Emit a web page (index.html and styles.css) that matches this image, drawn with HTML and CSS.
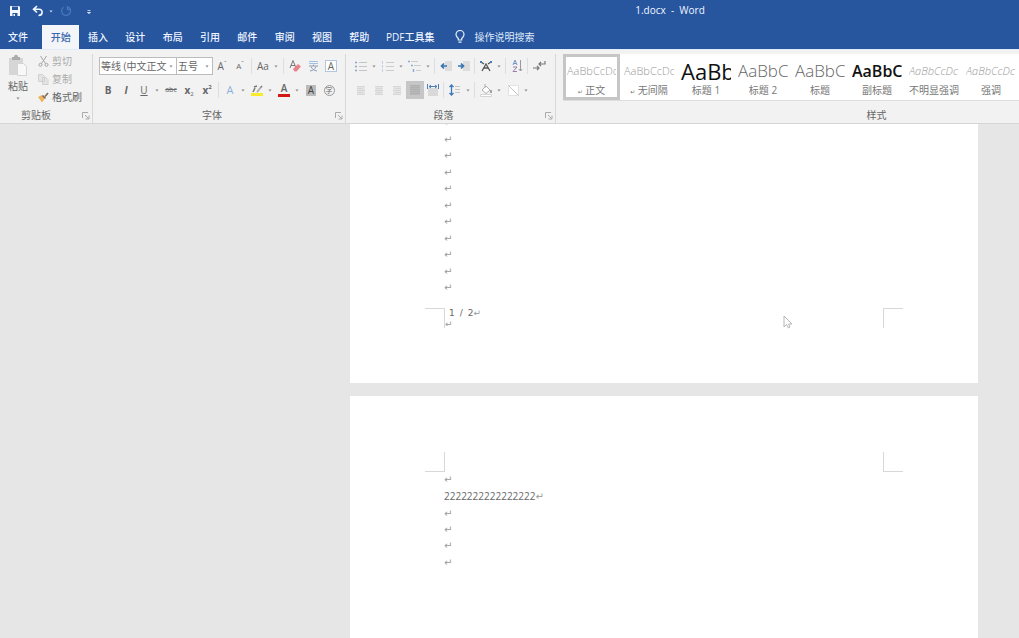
FILE: index.html
```html
<!DOCTYPE html>
<html lang="zh-CN">
<head>
<meta charset="utf-8">
<title>1.docx - Word</title>
<link rel="stylesheet" href="styles.css">
</head>
<body>
<svg class="defs" aria-hidden="true">
  <symbol id="caret" viewBox="0 0 5 3"><path d="M.5 .3h4L2.500 2.700z"/></symbol>
  <symbol id="launch" viewBox="0 0 8 8"><path d="M.5 6V.5H6M3 3l3.500 3.500M7 3.500V7H3.500" fill="none" stroke="#aaa"/></symbol>
</svg>
<header class="titlebar">
  <div class="quick">
    <button class="qbtn" aria-label="保存"><svg viewBox="0 0 12 12" width="12" height="12"><path d="M1 1h9l1 1v9H1z" fill="#f3f7ff"/><path d="M3 1.500h6v3.500H3zM3.500 8h5v3h-5z" fill="#27569f"/><path d="M4.500 9h1.500v2H4.500z" fill="#f3f7ff"/></svg></button>
    <button class="qbtn" aria-label="撤消"><svg viewBox="0 0 12 12" width="12" height="12"><path d="M5 1L1.500 4.300 5 7.500M2 4.300h5c4.500 0 4 6.200-.5 6.200" fill="none" stroke="#f3f7ff" stroke-width="1.600"/></svg></button>
    <svg class="caret light"><use href="#caret"/></svg>
    <button class="qbtn" aria-label="重复"><svg viewBox="0 0 12 12" width="12" height="12"><path d="M7.500 1.600A4.500 4.500 0 1 1 3.500 2.200M7.500 1v3.500H11" fill="none" stroke="#4b76b9" stroke-width="1.300"/></svg></button>
    <button class="qbtn" aria-label="自定义快速访问工具栏"><svg viewBox="0 0 12 12" width="12" height="12"><path d="M4.500 5.500h3M4.500 7.500h3L6 8.500z" fill="#dfe9fb" stroke="#dfe9fb" stroke-width=".8"/></svg></button>
  </div>
  <div class="doc-title">1.docx&nbsp; -&nbsp; Word</div>
</header>
<nav class="tabs">
  <button class="tab file">文件</button>
  <div class="tab-set">
    <button class="tab active">开始</button><button class="tab">插入</button><button class="tab">设计</button><button class="tab">布局</button><button class="tab">引用</button><button class="tab">邮件</button><button class="tab">审阅</button><button class="tab">视图</button><button class="tab">帮助</button>
  </div>
  <button class="tab pdf">PDF工具集</button>
  <label class="search"><svg viewBox="0 0 10 14" width="10" height="14"><path d="M3.300 10V8.500C2.200 7.300 1 6.400 1 4.500a4 4 0 0 1 8 0c0 1.900-1.200 2.800-2.300 4V10zM3.500 12.200h3" fill="none" stroke="#e5eefc" stroke-width="1.200"/></svg><input type="text" placeholder="操作说明搜索" aria-label="操作说明搜索"></label>
</nav>
<section class="ribbon">
  <div class="group clipboard">
    <div class="group-body clip-body">
      <button class="paste"><svg viewBox="0 0 22 24" width="22" height="24"><path d="M2 4h14v17H2z" fill="#d6d6d6"/><path d="M5 3h2c0-3 4-3 4 0h2v3H5z" fill="#acacac"/><path d="M10.500 9.500h6l3 3v9h-9z" fill="#f8f8f8" stroke="#d4d4d4"/></svg><span>粘贴</span><svg class="caret"><use href="#caret"/></svg></button>
      <div class="clip-list">
        <button class="clip off"><svg viewBox="0 0 11 11" width="11" height="11"><path d="M2.500 0l5 7.500M8.500 0l-5 7.500" stroke="#a3a3a3" fill="none"/><circle cx="2.500" cy="8.800" r="1.500" fill="none" stroke="#a3a3a3"/><circle cx="8.500" cy="8.800" r="1.500" fill="none" stroke="#a3a3a3"/></svg>剪切</button>
        <button class="clip off"><svg viewBox="0 0 11 11" width="11" height="11"><path d="M.5 .5h4l2 2v5h-6zM4.500 3.500h3.500l2 2v5H4.500z" fill="#e4e4e4" stroke="#d0d0d0"/></svg>复制</button>
        <button class="clip"><svg viewBox="0 0 11 11" width="11" height="11"><path d="M0 5l4-2 3 3-3 4.500z" fill="#edb45c"/><path d="M4.500 3.500l3 3M7 4.500l3-3.500" stroke="#7b6b5a" stroke-width="1.600"/></svg>格式刷</button>
      </div>
    </div>
    <div class="group-label">剪贴板<button class="launcher" aria-label="剪贴板设置"><svg width="8" height="8"><use href="#launch"/></svg></button></div>
  </div>
  <div class="group font">
    <div class="group-body">
      <div class="row">
        <label class="combo name"><select aria-label="字体"><option>等线 (中文正文</option></select><svg class="caret"><use href="#caret"/></svg></label>
        <label class="combo size"><select aria-label="字号"><option>五号</option></select><svg class="caret"><use href="#caret"/></svg></label>
        <button class="ib letter" aria-label="增大字号">A<sup>ˆ</sup></button>
        <button class="ib letter small" aria-label="减小字号">A<sup>ˇ</sup></button>
        <i class="sep"></i>
        <button class="ib letter">Aa</button><svg class="caret drop"><use href="#caret"/></svg>
        <i class="sep"></i>
        <button class="ib" aria-label="清除格式"><svg viewBox="0 0 18 18"><path d="M4 11l3-7.500L10 11M5 8.500h4" stroke="#777" fill="none"/><path d="M7 12l5-5 3 2.500-4.500 5H8.500z" fill="#e9828b"/></svg></button>
        <button class="ib" aria-label="拼音指南"><svg viewBox="0 0 18 18"><path d="M5 4.500h9M5 6.500h9" stroke="#a3bfe2"/><path d="M5 9h9M9.500 7.500V9M7 9.500c1 2.500 3 4 6 4.500M12 9.500c-1 2.500-3 4-6 4.500" stroke="#8c9db8" fill="none"/></svg></button>
        <button class="ib" aria-label="字符边框"><span class="boxed">A</span></button>
      </div>
      <div class="row">
        <button class="ib letter bold">B</button><button class="ib letter ital">I</button><button class="ib letter under">U</button><svg class="caret drop"><use href="#caret"/></svg>
        <button class="ib letter strike">abc</button><button class="ib letter bold">x<sub>2</sub></button><button class="ib letter bold">x<sup>2</sup></button>
        <i class="sep"></i>
        <button class="ib letter glow">A</button><svg class="caret drop"><use href="#caret"/></svg>
        <button class="ib" aria-label="突出显示"><svg viewBox="0 0 18 18"><path d="M3 12h12v3H3z" fill="#f8ec2a"/><path d="M5 11l2-4M9 11l5-6M6 6l3-1" stroke="#777" stroke-width="1.500"/><path d="M8 11.500l5-5" stroke="#dedede"/></svg></button><svg class="caret drop"><use href="#caret"/></svg>
        <button class="ib" aria-label="字体颜色"><span class="colored">A</span></button><svg class="caret drop"><use href="#caret"/></svg>
        <button class="ib" aria-label="字符底纹"><span class="shaded">A</span></button>
        <button class="ib" aria-label="带圈字符"><span class="ringed">字</span></button>
      </div>
    </div>
    <div class="group-label">字体<button class="launcher" aria-label="字体设置"><svg width="8" height="8"><use href="#launch"/></svg></button></div>
  </div>
  <div class="group para">
    <div class="group-body">
      <div class="row">
        <button class="ib" aria-label="项目符号"><svg viewBox="0 0 18 18"><path d="M7 5.500h8M7 9.500h8M7 13.500h8" stroke="#c4c4c4"/><path d="M3 5.500h2M3 9.500h2M3 13.500h2" stroke="#8ca4c9" stroke-width="1.500"/></svg></button><svg class="caret drop"><use href="#caret"/></svg>
        <button class="ib" aria-label="编号"><svg viewBox="0 0 18 18"><path d="M7 5.500h8M7 9.500h8M7 13.500h8" stroke="#ccc"/><path d="M3.500 4v3M3.500 8v3M3.500 12v3" stroke="#c4d0e2"/></svg></button><svg class="caret drop"><use href="#caret"/></svg>
        <button class="ib" aria-label="多级列表"><svg viewBox="0 0 18 18"><path d="M5 4.500h7M8 8.500h7M10 13.500h5" stroke="#ccc"/><path d="M2 4.500h2M5 8.500h2M7.500 12v3" stroke="#8fabd4" stroke-width="1.500"/></svg></button><svg class="caret drop"><use href="#caret"/></svg>
        <i class="sep"></i>
        <button class="ib" aria-label="减少缩进"><svg viewBox="0 0 18 18"><path d="M8 4h7v10H8z" fill="#ddd"/><path d="M4 9h6M7 6.500L4.500 9 7 11.500" stroke="#3674b5" stroke-width="1.700" fill="none"/></svg></button>
        <button class="ib" aria-label="增加缩进"><svg viewBox="0 0 18 18"><path d="M8 4h7v10H8z" fill="#ddd"/><path d="M3 9h6M6 6.500L8.500 9 6 11.500" stroke="#3674b5" stroke-width="1.700" fill="none"/></svg></button>
        <i class="sep"></i>
        <button class="ib" aria-label="中文版式"><svg viewBox="0 0 18 18"><path d="M5 14l4-7 4 7M6.500 11h5" stroke="#555" stroke-width="1.300" fill="none"/><path d="M4 5l3 2M14 5l-3 2" stroke="#555" stroke-width="1.300"/><path d="M3 4h2v2H3zM13 4h2v2h-2z" fill="#477cb8"/></svg></button><svg class="caret drop"><use href="#caret"/></svg>
        <i class="sep"></i>
        <button class="ib" aria-label="排序"><svg viewBox="0 0 18 18"><path d="M5 8l2-5 2 5M5.500 6.500h3" stroke="#7597c8" fill="none"/><path d="M5 10h4l-4 4.500h4" stroke="#a07bae" fill="none"/><path d="M12.500 3v11M10.800 12l1.700 2 1.700-2" stroke="#999" fill="none"/></svg></button>
        <i class="sep"></i>
        <button class="ib" aria-label="显示编辑标记"><svg viewBox="0 0 18 18"><path d="M15 4v3H9M11 5L9 7l2 2M3 11h6M7 9l2 2-2 2" stroke="#777" stroke-width="1.200" fill="none"/></svg></button>
      </div>
      <div class="row">
        <button class="ib" aria-label="左对齐"><svg viewBox="0 0 18 18"><path d="M5 5h8v9H5z" fill="#e4e4e4"/><path d="M5 5.500h8M5 7.500h6M5 9.500h8M5 11.500h6M5 13.500h8" stroke="#d6d6d6"/></svg></button>
        <button class="ib" aria-label="居中"><svg viewBox="0 0 18 18"><path d="M5 5h8v9H5z" fill="#e4e4e4"/><path d="M5 5.500h8M6 7.500h6M5 9.500h8M6 11.500h6M5 13.500h8" stroke="#d6d6d6"/></svg></button>
        <button class="ib" aria-label="右对齐"><svg viewBox="0 0 18 18"><path d="M5 5h8v9H5z" fill="#e4e4e4"/><path d="M5 5.500h8M7 7.500h6M5 9.500h8M7 11.500h6M5 13.500h8" stroke="#d6d6d6"/></svg></button>
        <button class="ib on" aria-label="两端对齐"><svg viewBox="0 0 18 18"><path d="M4 4h10v10H4z" fill="#b8b8b8"/><path d="M4 4.500h10M4 6.500h10M4 8.500h10M4 10.500h10M4 12.500h10" stroke="#b0b0b0"/></svg></button>
        <button class="ib" aria-label="分散对齐"><svg viewBox="0 0 18 18"><path d="M4 7h10v8H4z" fill="#d9d9d9"/><path d="M3.500 3v5M14.500 3v5M5 5.500h8M7 4L5 5.500 7 7M11 4l2 1.500L11 7" stroke="#4c80bc" fill="none"/></svg></button>
        <i class="sep"></i>
        <button class="ib" aria-label="行距"><svg viewBox="0 0 18 18"><path d="M9 5.500h5M9 8.500h5M9 11.500h5" stroke="#c4c4c4"/><path d="M5.500 4v10M3.500 6l2-2 2 2M3.500 12l2 2 2-2" stroke="#3f78b6" stroke-width="1.300" fill="none"/></svg></button><svg class="caret drop"><use href="#caret"/></svg>
        <i class="sep"></i>
        <button class="ib" aria-label="底纹"><svg viewBox="0 0 18 18"><path d="M5 9l4-4 4 4-4 3.500zM8 3v4" stroke="#b0b0b0" fill="#fff"/><path d="M14 9v3" stroke="#888" stroke-width="1.500"/><path d="M3.500 13.500h11v2h-11z" fill="#fff" stroke="#d4d4d4"/></svg></button><svg class="caret drop"><use href="#caret"/></svg>
        <button class="ib" aria-label="边框"><svg viewBox="0 0 18 18"><path d="M4.500 4.500h10v10h-10z" fill="#fff" stroke="#e2e2e2"/><path d="M4.500 4.500l10 10" stroke="#c4c4c4"/></svg></button><svg class="caret drop"><use href="#caret"/></svg>
      </div>
    </div>
    <div class="group-label">段落<button class="launcher" aria-label="段落设置"><svg width="8" height="8"><use href="#launch"/></svg></button></div>
  </div>
  <div class="group styles">
    <div class="gallery">
      <button class="style chosen"><span class="preview body">AaBbCcDc</span><span class="cap"><span class="pm">↵</span> 正文</span></button>
      <button class="style"><span class="preview body">AaBbCcDc</span><span class="cap"><span class="pm">↵</span> 无间隔</span></button>
      <button class="style"><span class="preview h1">AaBb</span><span class="cap">标题 1</span></button>
      <button class="style"><span class="preview h2">AaBbC</span><span class="cap">标题 2</span></button>
      <button class="style"><span class="preview h2">AaBbC</span><span class="cap">标题</span></button>
      <button class="style"><span class="preview sub">AaBbC</span><span class="cap">副标题</span></button>
      <button class="style"><span class="preview body em">AaBbCcDc</span><span class="cap">不明显强调</span></button>
      <button class="style"><span class="preview body em">AaBbCcDc</span><span class="cap">强调</span></button>
    </div>
    <div class="group-label">样式</div>
  </div>
</section>
<main class="canvas">
  <article class="page first">
    <div class="lines eleven"><p>↵</p><p>↵</p><p>↵</p><p>↵</p><p>↵</p><p>↵</p><p>↵</p><p>↵</p><p>↵</p><p>↵</p><p>↵</p></div>
    <div class="margin-row">
      <i class="crop top right"></i>
      <div class="footer"><p class="page-no">1<span>/</span>2<b>↵</b></p><p>↵</p></div>
      <i class="crop top left"></i>
    </div>
  </article>
  <article class="page second">
    <div class="margin-row"><i class="crop bottom right"></i><i class="crop bottom left"></i></div>
    <div class="lines six"><p>↵</p><p><span>2222222222222222</span>↵</p><p>↵</p><p>↵</p><p>↵</p><p>↵</p></div>
  </article>
</main>
<svg class="pointer" viewBox="0 0 10 14" width="10" height="14"><path d="M1 1v11l2.500-2.500 2 3.500 1.500-1-1.500-3H9z" fill="#fff" stroke="#b4b4b4"/></svg>
</body>
</html>
```
FILE: styles.css
```css
* { box-sizing: border-box; }
body {
  margin: 0;
  height: 100vh;
  display: flex;
  flex-direction: column;
  overflow: hidden;
  background: #e6e6e6;
  color: #666;
  font: 10px/14px "Open Sans", "Noto Sans CJK SC", sans-serif;
}
button, input, select {
  font: inherit;
  color: inherit;
  background: none;
  border: 0;
  padding: 0;
  margin: 0;
}
p { margin: 0; }
.defs { position: absolute; width: 0; height: 0; }
.caret { width: 4px; height: 3px; fill: #888; flex: none; }
.caret.light { fill: #c5d6f2; }
.caret.drop { width: 9px; padding: 0 3px 0 2px; }

.titlebar {
  position: relative;
  display: flex;
  align-items: center;
  height: 25px;
  flex: none;
  padding-bottom: 3px;
  background: #27569f;
  color: #f0f5ff;
}
.quick { display: flex; align-items: center; padding-left: 9px; }
.qbtn { display: flex; width: 12px; }
.qbtn + .qbtn { margin-left: 11px; }
.quick .caret { margin: 0 7px 0 5px; }
.doc-title { position: absolute; inset: 3px 0 auto; padding-left: 321px; text-align: center; }

.tabs { display: flex; height: 24px; flex: none; background: #27569f; color: #f0f5ff; }
.tab { text-align: center; font-weight: 500; white-space: nowrap; }
.file { width: 36px; margin-right: 6px; }
.tab-set { display: grid; grid-template-columns: repeat(9, 1fr); width: 336px; }
.active { background: #f3f5f9; color: #3a67ad; }
.pdf { padding: 0 8px; }
.search { display: flex; align-items: center; gap: 9px; padding-left: 13px; }
.search input { width: 90px; outline: 0; }
.search input::placeholder { color: #dfe9fb; opacity: 1; }

.ribbon {
  position: relative;
  display: flex;
  height: 75px;
  flex: none;
  padding-top: 4px;
  background: #f2f2f2;
  border-top: 1px solid #e4ebf8;
  border-bottom: 1px solid #d6d6d6;
}
.group { display: flex; flex-direction: column; justify-content: space-between; border-right: 1px solid #d8d8d8; }
.clipboard { width: 93px; }
.font { width: 253px; padding-left: 6px; }
.para { width: 210px; padding-left: 6px; }
.styles { flex: 1; min-width: 0; border: 0; padding-left: 7px; }
.group-label { position: relative; text-align: center; height: 15px; padding-right: 20px; }
.styles .group-label { padding: 0 0 0 171px; }
.launcher { position: absolute; right: 2px; top: 4px; display: flex; }
.group-body { padding-top: 2px; }
.clip-body { display: flex; align-items: flex-start; padding-top: 0; }
.paste { display: flex; flex-direction: column; align-items: center; width: 36px; height: 50px; }
.paste span { margin: 1px 0 4px; }
.clip-list { display: flex; flex-direction: column; padding-left: 2px; }
.clip { display: flex; align-items: center; gap: 3px; height: 18px; line-height: 12px; white-space: nowrap; }
.clip-list { margin-top: -2px; }
.off { color: #aaa; }

.row { display: flex; align-items: center; height: 24px; padding-bottom: 4px; }
.combo { position: relative; display: flex; height: 18px; border: 1px solid #bcbcbc; background: #fff; }
.combo select { appearance: none; width: 100%; padding-left: 1px; outline: 0; }
.combo .caret { position: absolute; right: 3px; top: 7px; }
.name { width: 78px; }
.size { width: 36px; border-left: 0; }
.ib { display: flex; align-items: center; justify-content: center; width: 18px; height: 18px; flex: none; }
.ib > svg { width: 18px; height: 18px; flex: none; }
.sep { width: 1px; height: 16px; margin: 0 2px 0 1px; background: #dedede; }
.font .sep { margin-left: 2px; }
.letter sup, .letter sub { font-size: 6px; line-height: 6px; }
.letter sup { align-self: flex-start; padding-top: 3px; }
.letter sub { align-self: flex-end; padding-bottom: 2px; font-weight: 400; }
.small { font-size: 8px; }
.bold { font-weight: 700; }
.ital { font-style: italic; font-weight: 700; }
.under { text-decoration: underline; }
.strike { font-size: 7px; text-decoration: line-through; }
.glow { color: #8db3dc; font-size: 11px; }
.boxed { width: 12px; height: 12px; border: 1px solid #b4c6de; line-height: 10px; background: #fff; }
.shaded { width: 10px; height: 11px; line-height: 11px; background: #bbb; color: #444; }
.colored { width: 12px; height: 14px; line-height: 11px; font-weight: 600; border-bottom: 3px solid #d31616; }
.ringed { width: 11px; height: 11px; line-height: 9px; font-size: 7px; border: 1px solid #999; border-radius: 50%; }
.on { background: #c6c6c6; }

.gallery { display: grid; grid-template-columns: repeat(8, 1fr); height: 47px; background: #fff; border-bottom: 1px solid #ddd; }
.style { display: flex; flex-direction: column; justify-content: flex-end; min-width: 0; padding: 0 3px 3px 4px; }
.chosen { padding: 0 1px; border: 3px solid #c6c6c6; height: 46px; }
.preview { width: 100%; overflow: hidden; text-align: left; white-space: nowrap; height: 24px; line-height: 24px; color: #999; }
.cap { width: 100%; text-align: center; height: 14px; color: #777; white-space: nowrap; }
.pm { font: 6px/8px "DejaVu Sans", sans-serif; }
.body { font-size: 11px; font-weight: 300; }
.h1 { font-size: 22px; color: #111; }
.h2 { font-size: 17px; font-weight: 300; color: #666; }
.sub { font-size: 16px; font-weight: 600; color: #111; }
.em { font-style: italic; }

.canvas { flex: 1; min-height: 0; overflow: hidden; display: flex; flex-direction: column; gap: 13px; padding: 0 41px 0 350px; }
.page { background: #fff; flex: none; }
.first { padding-bottom: 55px; }
.second { padding-top: 56px; flex: 1; }
.lines { display: grid; padding-left: 94px; font: 10px/16px "DejaVu Sans", sans-serif; color: #999; }
.lines span { font: 10px/16px "Open Sans", sans-serif; color: #666; }
.eleven { height: 182px; margin: -9px 0 11px; }
.six { height: 99px; }
.margin-row { display: flex; justify-content: space-between; padding: 0 75px; }
.crop { width: 20px; height: 20px; border: 0 solid #d8d8d8; flex: none; }
.top { border-top-width: 1px; }
.bottom { border-bottom-width: 1px; }
.right { border-right-width: 1px; }
.left { border-left-width: 1px; }
.footer { flex: 1; height: 20px; font: 9px/12px "DejaVu Sans", sans-serif; color: #999; }
.page-no { padding-left: 4px; line-height: 10px; color: #666; }
.page-no span { padding: 0 5px; }
.page-no b { font-weight: 400; color: #999; }
.pointer { position: absolute; left: 783px; top: 315px; }
```
